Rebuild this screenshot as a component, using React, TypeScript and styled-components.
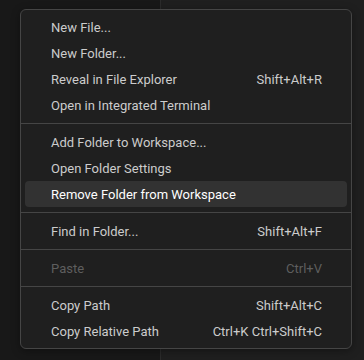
import React from "react";
import styled, { createGlobalStyle } from "styled-components";

const Global = createGlobalStyle`
  html, body { margin: 0; padding: 0; background: #1f1f1f; }
  #root { width: 364px; height: 360px; }
`;

const Page = styled.div`
  position: relative;
  display: flex;
  width: 364px;
  height: 360px;
  overflow: hidden;
  font-family: "Segoe UI", Roboto, sans-serif;
`;

const Sidebar = styled.div`
  width: 160px;
  background: #181818;
  border-right: 1px solid #2b2b2b;
`;

const Editor = styled.div`
  flex: 1;
  background: #1f1f1f;
`;

const Menu = styled.div`
  position: absolute;
  left: 20px;
  top: 9px;
  width: 330px;
  box-sizing: content-box;
  border: 1px solid #454545;
  border-radius: 6px;
  background: #1f1f1f;
  padding: 4px 0;
  box-shadow: 0 2px 8px rgba(0, 0, 0, 0.36);
  display: flex;
  flex-direction: column;
`;

const Item = styled.div<{ $active?: boolean; $disabled?: boolean }>`
  display: flex;
  align-items: center;
  justify-content: space-between;
  height: 26px;
  margin: 0 4px;
  padding: 1px 25px 0 26px;
  box-sizing: border-box;
  border-radius: 4px;
  font-size: 13px;
  background: ${(p) => (p.$active ? "#323232" : "transparent")};
  color: ${(p) => (p.$disabled ? "#5e5e5e" : p.$active ? "#ffffff" : "#cccccc")};
`;

const Label = styled.span`
  white-space: nowrap;
`;

const Key = styled.span`
  white-space: nowrap;
`;

const Separator = styled.div`
  height: 1px;
  margin: 5px 0;
  background: #454545;
`;

type Entry = { label: string; key?: string; active?: boolean; disabled?: boolean } | "sep";

const entries: Entry[] = [
  { label: "New File..." },
  { label: "New Folder..." },
  { label: "Reveal in File Explorer", key: "Shift+Alt+R" },
  { label: "Open in Integrated Terminal" },
  "sep",
  { label: "Add Folder to Workspace..." },
  { label: "Open Folder Settings" },
  { label: "Remove Folder from Workspace", active: true },
  "sep",
  { label: "Find in Folder...", key: "Shift+Alt+F" },
  "sep",
  { label: "Paste", key: "Ctrl+V", disabled: true },
  "sep",
  { label: "Copy Path", key: "Shift+Alt+C" },
  { label: "Copy Relative Path", key: "Ctrl+K Ctrl+Shift+C" },
];

export default function App() {
  return (
    <>
      <Global />
      <Page>
        <Sidebar />
        <Editor />
        <Menu>
          {entries.map((e, i) =>
            e === "sep" ? (
              <Separator key={i} />
            ) : (
              <Item key={i} $active={e.active} $disabled={e.disabled}>
                <Label>{e.label}</Label>
                {e.key && <Key>{e.key}</Key>}
              </Item>
            )
          )}
        </Menu>
      </Page>
    </>
  );
}
